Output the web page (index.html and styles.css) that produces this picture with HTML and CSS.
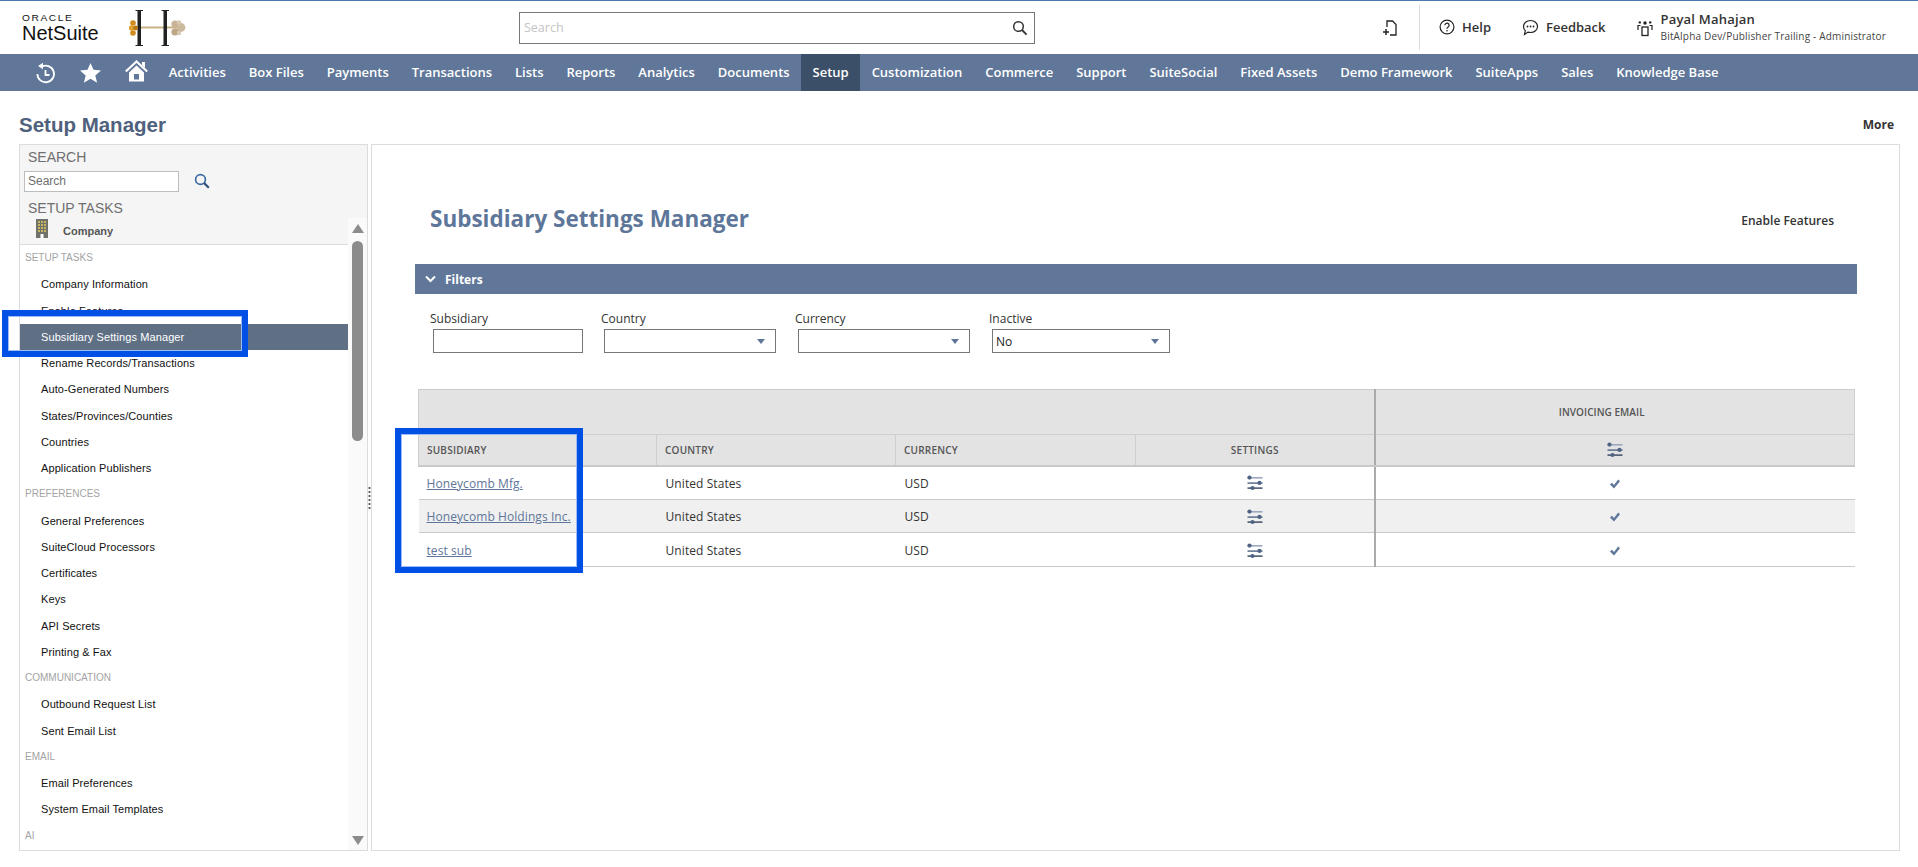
FILE: index.html
```html
<!DOCTYPE html>
<html lang="en">
<head>
<meta charset="utf-8">
<title>Subsidiary Settings Manager</title>
<link rel="stylesheet" href="styles.css">
</head>
<body>
<svg class="defs" width="0" height="0" aria-hidden="true">
  <symbol id="sliders" viewBox="0 0 16 16">
    <rect x="0.5" y="2" width="15" height="1.6" fill="#9aa8bd"/>
    <circle cx="2.5" cy="2.6" r="2.1" fill="#4f6484"/>
    <rect x="0.5" y="7.4" width="15" height="1.4" fill="#4f6484"/>
    <circle cx="12.5" cy="7.9" r="2.1" fill="#4f6484"/>
    <rect x="0.5" y="12.4" width="15" height="1.4" fill="#33435c"/>
    <circle cx="5.5" cy="13" r="2.1" fill="#4f6484"/>
  </symbol>
  <symbol id="check" viewBox="0 0 12 12">
    <path d="M1 6.4l1.9-1.7L5 7l4.2-5.4L11 3.2 5 10.6z" fill="#5d7699"/>
  </symbol>
</svg>

<header class="topbar">
  <div class="brand">
    <span class="oracle">ORACLE</span>
    <span class="netsuite">NetSuite</span>
  </div>
  <svg class="hlogo" width="58" height="36" viewBox="0 0 58 36">
    <rect x="8" y="16.5" width="42" height="2" fill="#c6b283"/>
    <rect x="8.5" y="0" width="3.5" height="36" fill="#222"/>
    <rect x="6.5" y="0" width="7.5" height="1" fill="#222"/>
    <rect x="6.5" y="35" width="7.5" height="1" fill="#222"/>
    <rect x="34.5" y="0" width="3.5" height="36" fill="#222"/>
    <rect x="32.5" y="0" width="7.5" height="1" fill="#222"/>
    <rect x="32.5" y="35" width="7.5" height="1" fill="#222"/>
    <circle cx="4" cy="13" r="2.8" fill="#d18a1c"/>
    <circle cx="2.6" cy="18" r="2.8" fill="#e0a030"/>
    <circle cx="4" cy="23" r="2.8" fill="#d18a1c"/>
    <circle cx="6.6" cy="18" r="2.4" fill="#b9750f"/>
    <circle cx="46" cy="14" r="3.6" fill="#c8b396"/>
    <circle cx="52" cy="17.5" r="4.4" fill="#cdb99c"/>
    <circle cx="46" cy="22" r="3.6" fill="#bda687"/>
    <circle cx="50" cy="12.5" r="2.2" fill="#d8c8b0"/>
    <circle cx="50" cy="23" r="2.2" fill="#d8c8b0"/>
  </svg>
  <div class="globalsearch">
    <span class="placeholder">Search</span>
    <svg width="16" height="16" viewBox="0 0 16 16"><circle cx="6.5" cy="6.5" r="4.8" fill="none" stroke="#333" stroke-width="1.5"/><path d="M10 10l4.6 4.6" stroke="#333" stroke-width="1.8"/></svg>
  </div>
  <div class="tools">
    <svg class="newicon" width="16" height="18" viewBox="0 0 16 18"><path d="M5 8V2h5.5L14 5.5V16H8" fill="none" stroke="#222" stroke-width="1.3"/><path d="M4 10v6M1 13h6" stroke="#222" stroke-width="1.5"/></svg>
    <span class="sep"></span>
    <span class="tool help">
      <svg width="16" height="16" viewBox="0 0 16 16"><circle cx="8" cy="8" r="6.9" fill="none" stroke="#222" stroke-width="1.2"/><path d="M5.9 6.2a2.1 2.1 0 1 1 3.2 1.8c-.8.5-1.1.9-1.1 1.7" fill="none" stroke="#222" stroke-width="1.2"/><circle cx="8" cy="11.8" r=".8" fill="#222"/></svg>
      Help
    </span>
    <span class="tool feedback">
      <svg width="17" height="17" viewBox="0 0 17 17"><path d="M8.5 1.5c4 0 7 2.6 7 6s-3 6-7 6c-.9 0-1.700-.1-2.500-.4L2.500 15.500l.8-3.700C2 10.700 1.500 9.200 1.500 7.500c0-3.400 3-6 7-6z" fill="none" stroke="#222" stroke-width="1.2"/><circle cx="5.500" cy="7.500" r=".9" fill="#222"/><circle cx="8.500" cy="7.500" r=".9" fill="#222"/><circle cx="11.500" cy="7.500" r=".9" fill="#222"/></svg>
      Feedback
    </span>
    <svg class="usericon" width="16" height="18" viewBox="0 0 16 18"><circle cx="8" cy="4" r="1.700" fill="#222"/><circle cx="2.800" cy="3.400" r="1.200" fill="#222"/><circle cx="13.200" cy="3.400" r="1.200" fill="#222"/><path d="M1 11V6.500h2.500M15 11V6.500h-2.500" fill="none" stroke="#222" stroke-width="1.200"/><rect x="5" y="8" width="6" height="8.500" fill="none" stroke="#222" stroke-width="1.300"/></svg>
    <div class="user">
      <span class="uname">Payal Mahajan</span>
      <span class="urole">BitAlpha Dev/Publisher Trailing - Administrator</span>
    </div>
  </div>
</header>

<nav class="navbar">
  <span class="navicon hist">
    <svg width="21" height="22" viewBox="0 0 21 22"><path d="M6.500 4.800A8.300 8.300 0 1 1 2.400 12" fill="none" stroke="#fff" stroke-width="1.800"/><path d="M8 0.800v6.400L3 4z" fill="#fff"/><path d="M10.500 8v5h4" fill="none" stroke="#fff" stroke-width="1.800"/></svg>
  </span>
  <span class="navicon star">
    <svg width="21" height="20" viewBox="0 0 21 20"><path d="M10.500 0l3 6.800 7.500.7-5.700 4.900 1.800 7.300-6.600-3.900-6.600 3.900 1.800-7.300L0 7.500l7.500-.7z" fill="#fff"/></svg>
  </span>
  <span class="navicon home">
    <svg width="23" height="22" viewBox="0 0 23 22"><path d="M0.800 11.500L11.500 1.500l10.700 10" fill="none" stroke="#fff" stroke-width="2.200"/><path d="M17 2h3v6l-3-2.800z" fill="#fff"/><path d="M4 12.500l7.500-7 7.500 7V21.500H4z" fill="#fff"/><rect x="9" y="14" width="5" height="5.500" fill="#607799"/></svg>
  </span>
  <a class="navitem">Activities</a>
  <a class="navitem">Box Files</a>
  <a class="navitem">Payments</a>
  <a class="navitem">Transactions</a>
  <a class="navitem">Lists</a>
  <a class="navitem">Reports</a>
  <a class="navitem">Analytics</a>
  <a class="navitem">Documents</a>
  <a class="navitem active">Setup</a>
  <a class="navitem">Customization</a>
  <a class="navitem">Commerce</a>
  <a class="navitem">Support</a>
  <a class="navitem">SuiteSocial</a>
  <a class="navitem">Fixed Assets</a>
  <a class="navitem">Demo Framework</a>
  <a class="navitem">SuiteApps</a>
  <a class="navitem">Sales</a>
  <a class="navitem">Knowledge Base</a>
</nav>

<div class="pagetitle">
  <h1>Setup Manager</h1>
  <span class="more">More</span>
</div>

<div class="workspace">
  <aside class="side">
    <div class="sidehead">
      <div class="sidelabel">SEARCH</div>
      <div class="sidesearch">
        <span class="sideinput">Search</span>
        <svg width="16" height="16" viewBox="0 0 16 16"><circle cx="6.500" cy="6.500" r="4.900" fill="none" stroke="#3f6ea5" stroke-width="1.700"/><path d="M10 10l4.800 4.800" stroke="#2d4f7f" stroke-width="2.200"/></svg>
      </div>
      <div class="sidelabel tasks">SETUP TASKS</div>
      <div class="company">
        <svg width="12" height="19" viewBox="0 0 12 19"><rect width="12" height="19" fill="#6f7268"/><g fill="#c9b561"><rect x="2" y="2" width="2" height="2"/><rect x="5" y="2" width="2" height="2"/><rect x="8" y="2" width="2" height="2"/><rect x="2" y="5" width="2" height="2"/><rect x="5" y="5" width="2" height="2"/><rect x="8" y="5" width="2" height="2"/><rect x="2" y="8" width="2" height="2"/><rect x="5" y="8" width="2" height="2"/><rect x="8" y="8" width="2" height="2"/><rect x="2" y="11" width="2" height="2"/><rect x="5" y="11" width="2" height="2"/><rect x="8" y="11" width="2" height="2"/></g><rect x="4.500" y="15" width="3" height="4" fill="#fff"/></svg>
        <span>Company</span>
      </div>
    </div>
    <ul class="tasklist">
      <li class="group">SETUP TASKS</li>
      <li>Company Information</li>
      <li>Enable Features</li>
      <li class="selected">Subsidiary Settings Manager</li>
      <li>Rename Records/Transactions</li>
      <li>Auto-Generated Numbers</li>
      <li>States/Provinces/Counties</li>
      <li>Countries</li>
      <li>Application Publishers</li>
      <li class="group">PREFERENCES</li>
      <li>General Preferences</li>
      <li>SuiteCloud Processors</li>
      <li>Certificates</li>
      <li>Keys</li>
      <li>API Secrets</li>
      <li>Printing &amp; Fax</li>
      <li class="group">COMMUNICATION</li>
      <li>Outbound Request List</li>
      <li>Sent Email List</li>
      <li class="group">EMAIL</li>
      <li>Email Preferences</li>
      <li>System Email Templates</li>
      <li class="group">AI</li>
    </ul>
    <div class="scrollbar">
      <span class="arrow up"></span>
      <span class="thumb"></span>
      <span class="arrow down"></span>
    </div>
  </aside>
  <div class="gutter"><span class="grip"></span></div>
  <main class="main">
    <div class="mainhead">
      <h2>Subsidiary Settings Manager</h2>
      <span class="enable">Enable Features</span>
    </div>
    <div class="filterbar">
      <svg width="11" height="8" viewBox="0 0 11 8"><path d="M1 1.500l4.500 4.500L10 1.500" fill="none" stroke="#fff" stroke-width="2"/></svg>
      <span>Filters</span>
    </div>
    <div class="filters">
      <div class="filter f1"><label>Subsidiary</label><div class="box"></div></div>
      <div class="filter f2"><label>Country</label><div class="box sel"><i></i></div></div>
      <div class="filter f3"><label>Currency</label><div class="box sel"><i></i></div></div>
      <div class="filter f4"><label>Inactive</label><div class="box sel">No<i></i></div></div>
    </div>
    <table class="grid">
      <colgroup>
        <col class="c1"><col class="c2"><col class="c3"><col class="c4"><col class="c5">
      </colgroup>
      <thead>
        <tr class="grouprow"><th colspan="4"></th><th class="inv">INVOICING EMAIL</th></tr>
        <tr class="headrow">
          <th class="left">SUBSIDIARY</th>
          <th class="left">COUNTRY</th>
          <th class="left">CURRENCY</th>
          <th>SETTINGS</th>
          <th class="inv"><svg class="ic"><use href="#sliders"/></svg></th>
        </tr>
      </thead>
      <tbody>
        <tr>
          <td><a>Honeycomb Mfg.</a></td><td class="plain">United States</td><td class="plain">USD</td>
          <td class="mid"><svg class="ic"><use href="#sliders"/></svg></td>
          <td class="mid inv"><svg class="ck"><use href="#check"/></svg></td>
        </tr>
        <tr class="alt">
          <td><a>Honeycomb Holdings Inc.</a></td><td class="plain">United States</td><td class="plain">USD</td>
          <td class="mid"><svg class="ic"><use href="#sliders"/></svg></td>
          <td class="mid inv"><svg class="ck"><use href="#check"/></svg></td>
        </tr>
        <tr>
          <td><a>test sub</a></td><td class="plain">United States</td><td class="plain">USD</td>
          <td class="mid"><svg class="ic"><use href="#sliders"/></svg></td>
          <td class="mid inv"><svg class="ck"><use href="#check"/></svg></td>
        </tr>
      </tbody>
    </table>
  </main>
</div>

<div class="callout callout-nav"></div>
<div class="callout callout-table"></div>
</body>
</html>
```
FILE: styles.css
```css
* { box-sizing: border-box; }
html, body { margin: 0; padding: 0; height: 867px; overflow: hidden; background: #fff; }
body { position: relative; font-family: "Open Sans", "Liberation Sans", sans-serif; color: #222; }
.defs { position: absolute; }

/* top bar */
.topbar { height: 54px; border-top: 1px solid #4a78ad; display: flex; align-items: center; position: relative; }
.brand { display: flex; flex-direction: column; margin-left: 22px; width: 80px; color: #111; }
.oracle { font: 8.5px/9px "Liberation Sans", sans-serif; letter-spacing: 1.3px; margin-top: 2px; transform: scaleX(1.2); transform-origin: left; }
.netsuite { font: 20px/21px "Liberation Sans", sans-serif; transform: scaleY(1.05); }
.hlogo { margin-left: 27px; margin-top: 0; }
.globalsearch { margin-left: 332px; width: 516px; height: 32px; border: 1px solid #777; display: flex; align-items: center; justify-content: space-between; padding: 0 6px 0 4px; }
.placeholder { font-size: 12.5px; color: #c4c4c4; }
.tools { display: flex; align-items: center; margin-left: 347px; height: 46px; margin-top: -1px; }
.newicon { margin-right: 21px; margin-top: 1px; }
.sep { width: 1px; height: 45px; background: #ddd; margin-right: 19px; margin-top: 1px; }
.tool { display: flex; align-items: center; gap: 7px; font-size: 13px; font-weight: 600; color: #333; }
.help { margin-right: 31px; }
.feedback { margin-right: 31px; }
.usericon { margin-right: 8px; margin-top: 1px; }
.user { display: flex; flex-direction: column; margin-top: 1px; }
.uname { font-size: 13px; line-height: 17px; font-weight: 600; color: #333; letter-spacing: .2px; }
.urole { font-size: 10px; line-height: 16px; color: #444; letter-spacing: .18px; }

/* nav */
.navbar { height: 37px; background: #607799; display: flex; align-items: center; color: #fff; }
.navicon { display: flex; align-items: center; justify-content: center; height: 37px; }
.hist { margin-left: 35px; width: 21px; }
.star { margin-left: 24px; width: 21px; }
.home { margin-left: 24px; width: 23px; margin-right: 9.300px; margin-top: -3px; }
.navitem { height: 37px; display: flex; align-items: center; padding: 0 11.480px 2px; font-size: 13px; font-weight: 600; white-space: nowrap; color: #fff; }
.navitem.active { background: #3c4f68; }

/* page title */
.pagetitle { height: 53px; display: flex; justify-content: space-between; align-items: flex-end; padding: 0 24px 7px 19px; }
.pagetitle h1 { margin: 0; font: bold 20.500px/24px "Liberation Sans", sans-serif; color: #4f617c; }
.more { font-size: 12px; line-height: 24px; font-weight: 700; color: #333; }

/* workspace */
.workspace { display: flex; height: 707px; margin: 0 18px 0 19px; }
.side { position: relative; width: 349px; border: 1px solid #dcdcdc; display: flex; flex-direction: column; }
.sidehead { height: 100px; background: #f5f5f5; border-bottom: 1px solid #dcdcdc; padding-top: 4px; flex: none; }
.sidelabel { font: 14px/16px "Liberation Sans", sans-serif; color: #6f6f6f; margin-left: 8px; }
.sidesearch { display: flex; align-items: center; margin: 6px 0 0 4px; gap: 15px; height: 20px; }
.sideinput { width: 155px; height: 21px; background: #fff; border: 1px solid #bdbdbd; font: 12px/19px "Liberation Sans", sans-serif; color: #6f6f6f; padding-left: 3px; }
.tasks { margin-top: 9px; }
.company { display: flex; align-items: center; gap: 15px; margin: 3px 0 0 16px; font: bold 11px/19px "Liberation Sans", sans-serif; color: #555; }
.company span { position: relative; top: 3px; }
.tasklist { list-style: none; margin: 0; padding: 0; flex: 1; overflow: hidden; }
.tasklist li { height: 26.250px; padding-left: 21px; font: 11px/26px "Liberation Sans", sans-serif; color: #111; width: 328px; letter-spacing: .1px; }
.tasklist li.group { padding-left: 5px; color: #a3a3a3; font-size: 10px; line-height: 25px; letter-spacing: 0; }
.tasklist li.selected { background: #5f7085; color: #fff; font-weight: 400; }

.scrollbar { position: absolute; top: 73px; right: 0; bottom: 0; width: 19px; background: #fafafa; display: flex; flex-direction: column; align-items: center; padding: 6px 0 5px; }
.arrow { width: 0; height: 0; border-left: 6px solid transparent; border-right: 6px solid transparent; margin-left: 0; }
.arrow.up { border-bottom: 9px solid #8c8c8c; }
.arrow.down { border-top: 9px solid #8c8c8c; margin-top: auto; }
.thumb { width: 11px; height: 200px; background: #8c8c8c; border-radius: 6px; margin-top: 8px; }

.gutter { width: 3px; position: relative; border-right: 0; }
.grip { position: absolute; left: 0; top: 342px; width: 3px; height: 24px; background-image: radial-gradient(circle, #555 1px, transparent 1.200px); background-size: 3px 4px; }

/* main */
.main { flex: 1; border: 1px solid #dcdcdc; padding: 0 42px 0 43px; min-width: 0; }
.mainhead { height: 119px; display: flex; justify-content: space-between; align-items: flex-start; padding: 54px 22px 0 15px; }
.mainhead h2 { margin: 0; font-size: 22.500px; line-height: 40px; font-weight: 700; color: #5d7699; }
.enable { font-size: 12px; font-weight: 600; color: #333; margin-top: 13px; margin-right: 1px; }
.filterbar { height: 30px; background: #607799; display: flex; align-items: center; gap: 9px; padding-left: 10px; color: #fff; font-size: 12px; font-weight: 700; }

.filters { display: flex; height: 95px; padding-top: 16px; }
.filter { display: flex; flex-direction: column; }
.filter label { font-size: 12px; line-height: 17px; color: #333; margin-bottom: 2px; margin-left: -3px; }
.f1 { margin-left: 18px; width: 150px; }
.f2 { margin-left: 21px; width: 172px; }
.f3 { margin-left: 22px; width: 172px; }
.f4 { margin-left: 22px; width: 178px; }
.box { height: 24px; border: 1px solid #777; font-size: 12px; line-height: 24px; padding-left: 3px; position: relative; color: #222; }
.box i { position: absolute; right: 10px; top: 9px; width: 0; height: 0; border-left: 4.500px solid transparent; border-right: 4.500px solid transparent; border-top: 5px solid #5d7699; }

/* table */
.grid { border-collapse: collapse; table-layout: fixed; width: 1436px; margin-left: 3px; font-size: 12px; color: #333; letter-spacing: .08px; }
.c1 { width: 238px; } .c2 { width: 239px; } .c3 { width: 240px; } .c4 { width: 239px; } .c5 { width: 480px; }
.grid th { background: #e3e3e3; font-size: 10px; font-weight: 600; color: #555; letter-spacing: .22px; padding: 0; border: 1px solid #cfcfcf; text-align: center; }
.grouprow th { height: 45px; border-top: 1px solid #ccc; }
.grouprow th.inv { padding-right: 26px; letter-spacing: .05px; }
.headrow th { height: 31px; border-bottom: 2px solid #c9c9c9; }
.grid th.left { text-align: left; padding-left: 8px; }
.grid th.inv, .grid td.inv { border-left: 2px solid #aaa; }
.grid th:first-child { border-left: 1px solid #cfcfcf; }
.grid td { height: 33.670px; padding: 1px 0 0 8px; border-bottom: 1px solid #c9c9c9; }
.grid td.plain { padding-left: 9px; }
.grid td.mid { text-align: center; padding: 0; }
.grid td a { color: #5d7699; text-decoration: underline; }
.alt td { background: #f0f0f0; }
.ic { width: 16px; height: 16px; vertical-align: middle; }
.ck { width: 12px; height: 12px; vertical-align: middle; }

/* annotation rectangles */
.callout { position: absolute; border: 6px solid #0050e6; box-shadow: inset 0 0 0 1px #9dbcf5; pointer-events: none; }
.callout-nav { left: 2px; top: 310px; width: 246px; height: 47px; }
.callout-table { left: 395px; top: 428px; width: 188px; height: 145px; }
```
